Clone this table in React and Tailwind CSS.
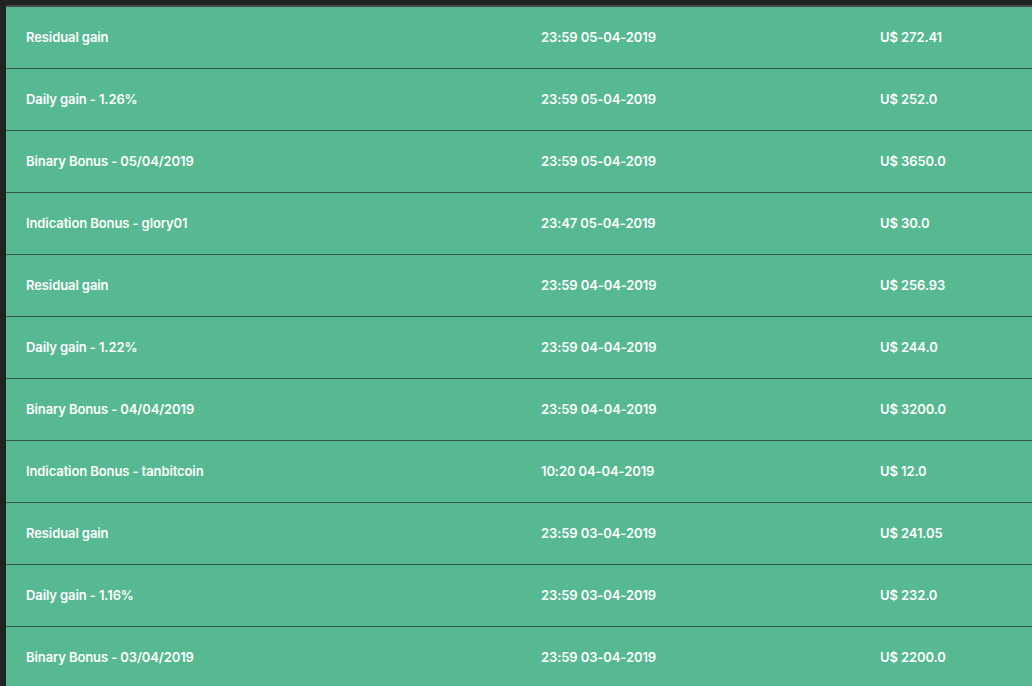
import React from 'react';

const rows = [
  { label: 'Residual gain', date: '23:59 05-04-2019', amount: 'U$ 272.41' },
  { label: 'Daily gain - 1.26%', date: '23:59 05-04-2019', amount: 'U$ 252.0' },
  { label: 'Binary Bonus - 05/04/2019', date: '23:59 05-04-2019', amount: 'U$ 3650.0' },
  { label: 'Indication Bonus - glory01', date: '23:47 05-04-2019', amount: 'U$ 30.0' },
  { label: 'Residual gain', date: '23:59 04-04-2019', amount: 'U$ 256.93' },
  { label: 'Daily gain - 1.22%', date: '23:59 04-04-2019', amount: 'U$ 244.0' },
  { label: 'Binary Bonus - 04/04/2019', date: '23:59 04-04-2019', amount: 'U$ 3200.0' },
  { label: 'Indication Bonus - tanbitcoin', date: '10:20 04-04-2019', amount: 'U$ 12.0' },
  { label: 'Residual gain', date: '23:59 03-04-2019', amount: 'U$ 241.05' },
  { label: 'Daily gain - 1.16%', date: '23:59 03-04-2019', amount: 'U$ 232.0' },
  { label: 'Binary Bonus - 03/04/2019', date: '23:59 03-04-2019', amount: 'U$ 2200.0' },
];

export default function App() {
  return (
    <div className="h-[686px] overflow-hidden bg-[#222222] pt-[5px] pl-[6px]">
      <div className="border-t-2 border-[#4a4a4a] bg-[#56b992] font-['Inter',sans-serif] text-[13px] font-semibold tracking-[-0.1px] text-white">
        {rows.map((row, i) => (
          <div
            key={i}
            className="grid h-[62px] grid-cols-[515px_339px_1fr] items-center border-b border-[#34594a]"
          >
            <div className="pl-5">{row.label}</div>
            <div className="pl-5">{row.date}</div>
            <div className="pl-5">{row.amount}</div>
          </div>
        ))}
      </div>
    </div>
  );
}
